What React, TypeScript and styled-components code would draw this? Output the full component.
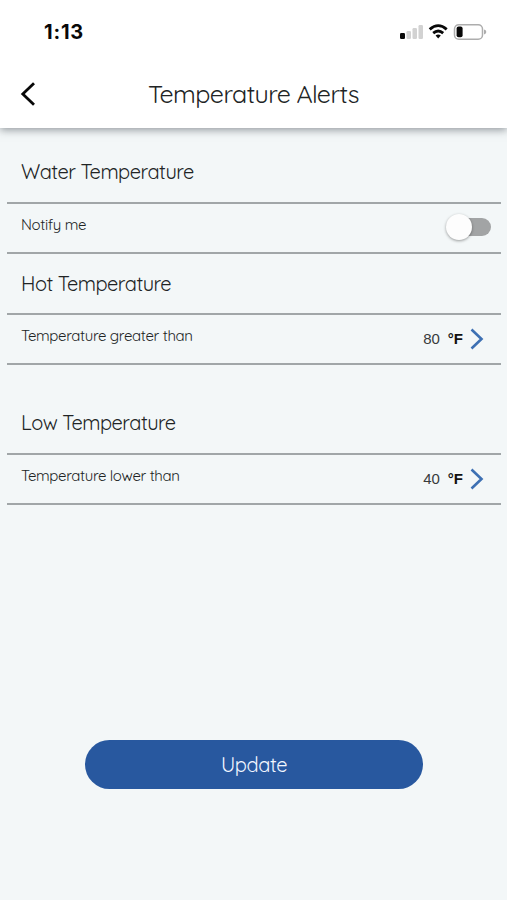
import React from 'react';
import styled, { createGlobalStyle } from 'styled-components';

const GlobalStyle = createGlobalStyle`
  *, *::before, *::after { box-sizing: border-box; }
  body { margin: 0; background: #f3f7f8; }
`;

const Screen = styled.div`
  width: 100%;
  min-height: 900px;
  display: flex;
  flex-direction: column;
  background: #f3f7f8;
  color: #212425;
  font-family: Quicksand, Inter, 'Liberation Sans', sans-serif;
  font-feature-settings: 'cv11';
`;

const Header = styled.header`
  height: 128px;
  background: #fff;
  box-shadow: 0 2px 8px rgba(50, 58, 66, 0.5);
`;

const StatusBar = styled.div`
  height: 62px;
  padding: 0 20px 0 44px;
  display: flex;
  align-items: center;
  justify-content: space-between;
`;

const Clock = styled.time`
  padding-top: 1px;
  font: 700 20px/24px Inter, sans-serif;
  letter-spacing: 0.8px;
  color: #080808;
`;

const StatusIcons = styled.svg`
  width: 90px;
  height: 20px;
`;

const NavBar = styled.div`
  height: 66px;
  display: grid;
  grid-template-columns: 56px 1fr 56px;
`;

const BackButton = styled.button`
  width: 56px;
  height: 64px;
  padding: 0 0 0 20px;
  border: 0;
  background: none;
  display: flex;
  align-items: center;
  svg { width: 16px; height: 26px; }
`;

const Title = styled.h1`
  margin: 0;
  text-align: center;
  font-size: 25px;
  font-weight: 450;
  line-height: 64px;
  letter-spacing: -0.6px;
  white-space: nowrap;
`;

const Content = styled.main`
  padding: 0 6px 0 7px;
`;

const SectionTitle = styled.h2<{ $height: number; $top: number }>`
  margin: 0;
  height: ${(p) => p.$height}px;
  padding: ${(p) => p.$top}px 0 0 14px;
  font-size: 20px;
  font-weight: 450;
  line-height: 24px;
  letter-spacing: -0.5px;
`;

const Row = styled.div`
  height: 52px;
  padding: 0 10px 0 14px;
  border-top: 2px solid #a1a6a8;
  border-bottom: 2px solid #a1a6a8;
  display: flex;
  justify-content: space-between;
`;

const RowLabel = styled.span`
  padding-top: 11px;
  font-size: 15px;
  font-weight: 450;
  line-height: 20px;
  letter-spacing: -0.37px;
`;

const Toggle = styled.button`
  width: 45px;
  height: 26px;
  margin-top: 10px;
  padding: 0;
  border: 0;
  background: none;
  display: flex;
  align-items: center;
`;

const Thumb = styled.span`
  width: 26px;
  height: 26px;
  border-radius: 50%;
  background: #fdfdfd;
  box-shadow: 0 1px 3px rgba(0, 0, 0, 0.38);
  z-index: 1;
`;

const Track = styled.span`
  width: 33px;
  height: 18px;
  margin-left: -14px;
  border-radius: 9px;
  background: #a2a4a5;
`;

const Value = styled.div`
  height: 48px;
  display: flex;
  align-items: center;
  padding: 0 7px 0 0;
  line-height: 20px;
  svg { width: 14px; height: 22px; margin-left: 7px; }
`;

const Degrees = styled.span`
  font-family: 'Liberation Sans', sans-serif;
  font-size: 15px;
  color: #383b3c;
  margin-right: 8px;
`;

const Unit = styled.span`
  font-family: 'Liberation Sans', sans-serif;
  font-weight: 700;
  font-size: 15px;
  color: #111;
`;

const UpdateButton = styled.button`
  width: 338px;
  height: 49px;
  margin: 235px 0 0 85px;
  padding: 0;
  border: 0;
  border-radius: 25px;
  background: #28589f;
  color: #f3f7ff;
  font: 450 20px/49px Quicksand, Inter, sans-serif;
  font-feature-settings: 'cv11';
  letter-spacing: -0.4px;
`;

const Reading = ({ value }: { value: number }) => (
  <Value>
    <Degrees>{value}</Degrees>
    <Unit>°F</Unit>
    <svg viewBox="0 0 14 22" fill="none" stroke="#3d70b3" strokeWidth="2.6">
      <path d="M1.5 1.5 11.5 11 1.5 20.5" />
    </svg>
  </Value>
);

export default function App() {
  return (
    <Screen>
      <GlobalStyle />
      <Header>
        <StatusBar>
          <Clock>1:13</Clock>
          <StatusIcons viewBox="0 0 90 20">
            <rect x="3" y="12" width="5" height="6" rx="1.2" fill="#080808" />
            <g fill="#d2d2d2">
              <rect x="9.5" y="10" width="4.5" height="8" rx="1.2" />
              <rect x="15.5" y="7" width="4.5" height="11" rx="1.2" />
              <rect x="21.5" y="4" width="4.5" height="14" rx="1.2" />
            </g>
            <g fill="none" stroke="#080808" strokeWidth="2.8">
              <path d="M32.7 8.4Q41.2.8 49.7 8.4" />
              <path d="M36.2 12.1Q41.2 7.8 46.2 12.1" />
            </g>
            <path d="M38.6 14.5Q41.2 12.6 43.8 14.5L41.2 17.6Z" fill="#080808" />
            <rect x="57.5" y="3.7" width="28" height="14.5" rx="4.3" fill="none" stroke="#adadad" strokeWidth="1.5" />
            <rect x="59.6" y="5.6" width="6" height="10.6" rx="2" fill="#080808" />
            <path d="M87 8.6Q89.3 9 89.3 11T87 13.4Z" fill="#adadad" />
          </StatusIcons>
        </StatusBar>
        <NavBar>
          <BackButton aria-label="Back">
            <svg viewBox="0 0 16 26" fill="none" stroke="#080808" strokeWidth="2.8">
              <path d="M14 2.2 2.8 13 14 23.8" />
            </svg>
          </BackButton>
          <Title>Temperature Alerts</Title>
        </NavBar>
      </Header>
      <Content>
        <SectionTitle $height={74} $top={32}>Water Temperature</SectionTitle>
        <Row>
          <RowLabel>Notify me</RowLabel>
          <Toggle role="switch" aria-checked={false} aria-label="Notify me">
            <Thumb />
            <Track />
          </Toggle>
        </Row>
        <SectionTitle $height={59} $top={18}>Hot Temperature</SectionTitle>
        <Row>
          <RowLabel>Temperature greater than</RowLabel>
          <Reading value={80} />
        </Row>
        <SectionTitle $height={88} $top={46}>Low Temperature</SectionTitle>
        <Row>
          <RowLabel>Temperature lower than</RowLabel>
          <Reading value={40} />
        </Row>
      </Content>
      <UpdateButton>Update</UpdateButton>
    </Screen>
  );
}
